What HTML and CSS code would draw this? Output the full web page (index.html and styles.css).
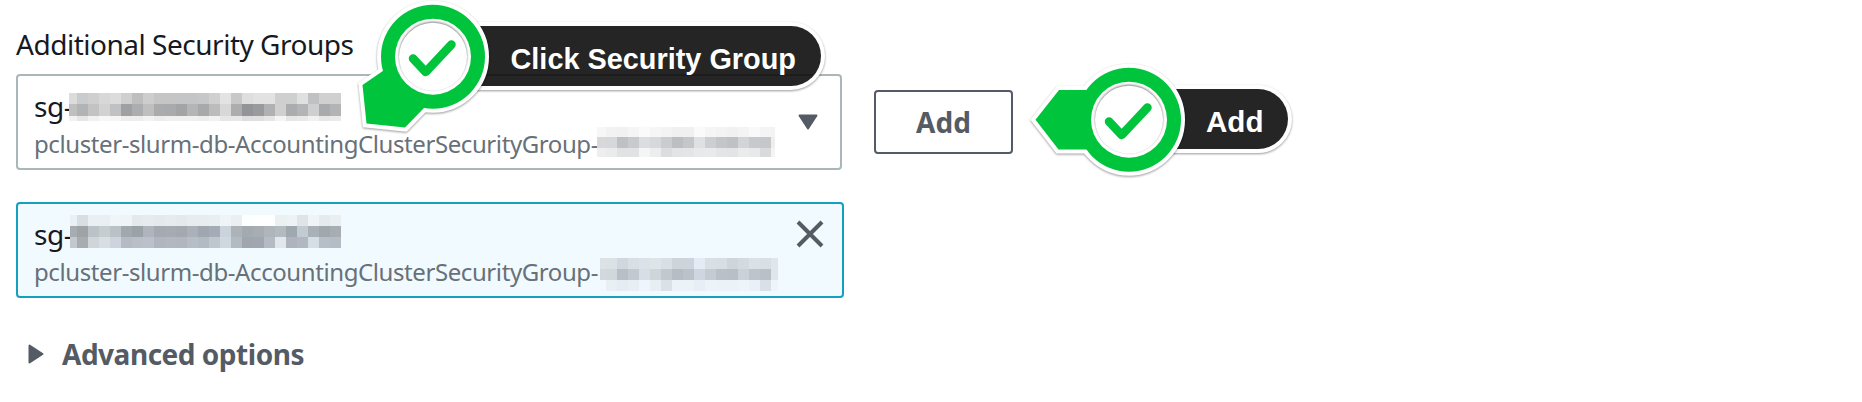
FILE: index.html
```
<!DOCTYPE html>
<html lang="en">
<head>
<meta charset="utf-8">
<title>Additional Security Groups</title>
<link rel="stylesheet" href="styles.css">
</head>
<body>
<main class="panel">
  <div class="field-label">Additional Security Groups</div>
  <div class="field-row">
    <div class="option select">
      <div class="option-text">
        <div class="option-id"><span class="id-prefix">sg-</span><svg class="mask mask-id" data-mask="selectId" width="273" height="28"></svg></div>
        <div class="option-desc"><span class="desc-prefix">pcluster-slurm-db-AccountingClusterSecurityGroup-</span><svg class="mask mask-desc" data-mask="selectDesc" width="178" height="30"></svg></div>
      </div>
      <svg class="caret" width="20" height="16" viewBox="0 0 20 16"><path d="M1.5 1.5h17L10 14.5z"/></svg>
    </div>
    <button class="add-button">Add</button>
  </div>
  <div class="option token">
    <div class="option-text">
      <div class="option-id"><span class="id-prefix">sg-</span><svg class="mask mask-token-id" data-mask="tokenId" width="272" height="33"></svg></div>
      <div class="option-desc"><span class="desc-prefix">pcluster-slurm-db-AccountingClusterSecurityGroup-</span><svg class="mask mask-token-desc" data-mask="tokenDesc" width="178" height="33"></svg></div>
    </div>
    <svg class="close" width="28" height="28" viewBox="0 0 28 28"><path d="M2 2l24 24M26 2L2 26"/></svg>
  </div>
  <div class="advanced">
    <svg class="expand" width="16" height="20" viewBox="0 0 16 20"><path d="M1.5 1.5v17L14.500 10z"/></svg>
    <span>Advanced options</span>
  </div>
</main>

<svg class="callout callout-select" width="490" height="150" viewBox="0 0 490 150">
  <g class="outline">
    <path d="M83 26H441a30 30 0 0 1 0 60H83z"/>
  </g>
  <path class="pill" d="M83 26H441a30 30 0 0 1 0 60H83z"/>
  <path class="pill-line" d="M110 75H463"/>
  <g class="outline">
    <path d="M43 64L12.500 85l4 38.500L55 127.500 74 108z"/>
    <circle cx="83" cy="56.700" r="52"/>
  </g>
  <g class="badge">
    <path d="M43 64L12.500 85l4 38.500L55 127.500 74 108z"/>
    <circle cx="83" cy="56.700" r="52"/>
  </g>
  <circle class="hole" cx="83" cy="56.700" r="38"/>
  <circle class="rim" cx="83" cy="56.700" r="34"/>
  <path class="check" d="M63 58.500L75.700 72 101.500 44.500"/>
  <text class="callout-text" x="160.500" y="69" textLength="285.500" lengthAdjust="spacingAndGlyphs">Click Security Group</text>
</svg>

<svg class="callout callout-add" width="280" height="140" viewBox="0 0 280 140">
  <g class="outline">
    <path d="M109 39H238a30 30 0 0 1 0 60H109z"/>
  </g>
  <path class="pill" d="M109 39H238a30 30 0 0 1 0 60H109z"/>
  <g class="outline">
    <path d="M15.500 69.700L39 40H80V99.500H38.500z"/>
    <circle cx="109" cy="69.700" r="52"/>
  </g>
  <g class="badge">
    <path d="M15.500 69.700L39 40H80V99.500H38.500z"/>
    <circle cx="109" cy="69.700" r="52"/>
  </g>
  <circle class="hole" cx="109" cy="69.700" r="38"/>
  <circle class="rim" cx="109" cy="69.700" r="34"/>
  <path class="check" d="M89 71.500L101.700 85 127.500 57.500"/>
  <text class="callout-text" x="186" y="82" textLength="57.500" lengthAdjust="spacingAndGlyphs">Add</text>
</svg>
<script src="masks.js"></script>
</body>
</html>
```

FILE: masks.js
```
// Pixelated redaction blocks: first column width, row edges, and one grey per 11px cell.
const masks = {
  selectId: {
    first: 8, edges: [0, 11, 22.5, 27.5],
    rows: [
      "dcdcdd cacbcc cfcfd0 d8d8d9 dcdcdd cfcfd0 bebebf cdcdce c5c5c6 c5c5c6 c5c5c6 c5c5c6 c7c7c8 d0d0d1 e3e3e4 c8c8c9 dededf e2e2e3 e2e2e3 cfcfd0 cfcfd0 e0e0e1 c0c1c2 d0d0d1 d0d0d1",
      "bfbfc0 b2b3b4 c3c3c4 d2d2d3 c0c1c2 9fa0a1 acadae bfbfc0 aaabac a9aaab a3a4a5 b5b5b6 a8a9aa bcbcbd d8d8d9 acadae 939497 999a9c b0b1b2 d0d0d1 abacad b4b4b6 cfcfd0 a9aaab b3b4b5",
      "f2f2f2 e6e6e7 f1f1f1 f7f7f7 f5f5f5 eeeeef eeeeef f3f3f3 ededee f0f0f0 f0f0f0 f0f0f0 ededee f2f2f2 e6e6e7 e8e8e9 dededf e0e0e1 e6e6e7 f5f5f5 e6e6e7 e9e9ea f1f1f1 e7e7e8 ebebec"
    ]
  },
  selectDesc: {
    first: 9, edges: [0, 10.3, 20.7, 30],
    rows: [
      "f7f7f8 f2f2f3 f1f1f2 f5f5f6 fafafa f6f6f7 f3f3f4 f0f0f1 f0f0f1 fafafb f5f5f6 f3f3f4 f1f1f2 f4f4f5 f9f9fc f4f4f5 f3f3f4",
      "d7d8da d6d7d9 bec0c3 c9cacd dcdde0 d7d8da cbccd0 bcbec2 c4c6c9 dfe0e2 cdced1 c3c5c8 bfc1c5 d3d4d7 c7c9cc c5c7ca eeeeef",
      "eeeeef ebebec e1e2e4 e1e2e4 f5f5f6 ecedee dcdddf e3e4e5 e4e5e6 e8e9ea e9eaeb e4e5e6 e3e4e5 ebebec e8e9ea d9dadc f4f4f5"
    ]
  },
  tokenId: {
    first: 7, edges: [0, 10.5, 21.5, 32.5],
    rows: [
      "eaf1f5 d8dee1 e9eff3 e9eff2 f0f5f7 f0f4f6 e5e9ec e7ebee e5e9ec e7ebee e5e9ec e8ecef e8ecef e9eef0 f0f4f6 ebeff1 fdfefe ffffff ffffff ebf0f2 eef2f4 dfe4e7 f1f4f6 e5eaed e9eef1",
      "a7acb0 9fa3a7 bac3c7 c5cdd1 b9c2c7 a2a9ad 9ca3a8 b0b5bd a4aab1 a5abb0 a3a9ae acb1b9 a0a7b0 a7abb6 cbd4dd acb3b9 a4abb0 a7adb2 aeb5bb b3bbc1 9fa8ae c1cbd1 a9b0b6 a0a8ae a6aeb4",
      "c3c8cc a7acaf cfd5d9 d8dfe4 cdd4db b4bbc4 b8bfc7 bbc1cb b0b6be b1b8c0 b0b7be b7bdc7 b2bac4 bfc6ce cfd8df b3bac2 a0a6ad a1a7b0 b4bbc4 e0e8ee adb4bd b2b8c2 d5dee5 b7bec8 b4bcc6"
    ]
  },
  tokenDesc: {
    first: 6, edges: [0, 11, 22, 33],
    rows: [
      "dce3e7 dbe1e5 d0d7dd d9e0e4 dce2e7 dee5e9 d9dfe4 cdd4da ced4db e4ebf4 d8dfe5 d7dee4 ced5dc d3dae0 dce1e9 d8dfe5 e0e7ec",
      "d2d8dc d1d7da b8bfc6 c3c9d0 d7dee6 ced6da c2c8ce b6bdc4 bbc2c9 cfd6df c5cbd3 b9c0c7 b8bfc6 cad1d9 bdc4cb b9c0c7 dfe7ed",
      "f1f8fe e8f0f5 e5edf2 e7eff5 eef6fc e7eff4 dbe2e7 ebf3f8 ebf3f9 e7eef5 ecf4fa ebf3f8 ebf3f8 edf5fb e9f1f7 d9e1e8 edf5fb"
    ]
  }
};

document.querySelectorAll("[data-mask]").forEach((svg) => {
  const { first, edges, rows } = masks[svg.dataset.mask];
  rows.forEach((row, r) => {
    row.split(" ").forEach((color, c) => {
      const rect = document.createElementNS("http://www.w3.org/2000/svg", "rect");
      rect.setAttribute("x", c ? first + (c - 1) * 11 : 0);
      rect.setAttribute("y", edges[r]);
      rect.setAttribute("width", c ? 11 : first);
      rect.setAttribute("height", edges[r + 1] - edges[r]);
      rect.setAttribute("fill", "#" + color);
      svg.appendChild(rect);
    });
  });
});
```

FILE: styles.css
```
* { box-sizing: border-box; }

body {
  margin: 0;
  height: 402px;
  overflow: hidden;
  background: #fff;
  color: #16191f;
  font-family: "Noto Sans", sans-serif;
  font-size: 28px;
  line-height: 44px;
  letter-spacing: -0.48px;
}

.panel { padding: 22px 0 0 16px; }

.field-label { height: 52px; }

.field-row {
  display: flex;
  align-items: center;
  gap: 32px;
}

.option {
  display: flex;
  justify-content: space-between;
  height: 96px;
  padding: 8px 16px;
  border: 2px solid #aab7b8;
  border-radius: 4px;
}

.select {
  width: 826px;
  align-items: center;
  padding-right: 22px;
}

.token {
  width: 828px;
  margin-top: 32px;
  padding-right: 18px;
  border-color: #16a0bf;
  background: #f1faff;
}

.option-id, .option-desc {
  display: flex;
  align-items: flex-start;
  white-space: nowrap;
}

.option-id { height: 44px; }

.option-desc {
  height: 32px;
  color: #687078;
  font-size: 24px;
  line-height: 32px;
  letter-spacing: -0.41px;
}

.id-prefix { width: 35px; }
.desc-prefix { width: 563px; }

.mask { flex: none; shape-rendering: crispEdges; }
.mask-id { margin-top: 9px; }
.mask-desc { margin-top: -1px; }
.mask-token-id { margin: 3px 0 0 1px; }
.mask-token-desc { margin: 2px 0 0 3px; }

.caret, .expand {
  fill: #545b64;
  stroke: #545b64;
  stroke-width: 2;
  stroke-linejoin: round;
}

.close {
  margin-top: 8px;
  stroke: #545b64;
  stroke-width: 4;
}

.add-button {
  width: 139px;
  height: 64px;
  padding: 0;
  border: 2px solid #545b64;
  border-radius: 4px;
  background: #fff;
  color: #545b64;
  font: bold 28px/44px "Noto Sans", sans-serif;
}

.advanced {
  display: flex;
  align-items: center;
  gap: 18px;
  margin-top: 34px;
  padding-left: 12px;
  color: #545b64;
  font-weight: bold;
}

.callout { position: absolute; top: 0; letter-spacing: 0; }
.callout-select { left: 350px; }
.callout-add { left: 1020px; top: 50px; }

.outline {
  fill: #fff;
  stroke: #fff;
  stroke-width: 8;
  filter: drop-shadow(0 1.5px 1px rgba(0, 0, 0, .4));
}

.pill { fill: #252525; }
.pill-line { stroke: #1c1c1c; stroke-width: 2; }
.badge { fill: #00c43c; }
.hole { fill: #fff; }
.rim { fill: #fff; filter: drop-shadow(0 -1px 1px rgba(0, 0, 0, .5)); }

.check {
  fill: none;
  stroke: #00c43c;
  stroke-width: 8.5;
  stroke-linecap: round;
  stroke-linejoin: round;
}

.callout-text {
  fill: #fff;
  font: bold 30px "Liberation Sans", Arial, sans-serif;
}
```
